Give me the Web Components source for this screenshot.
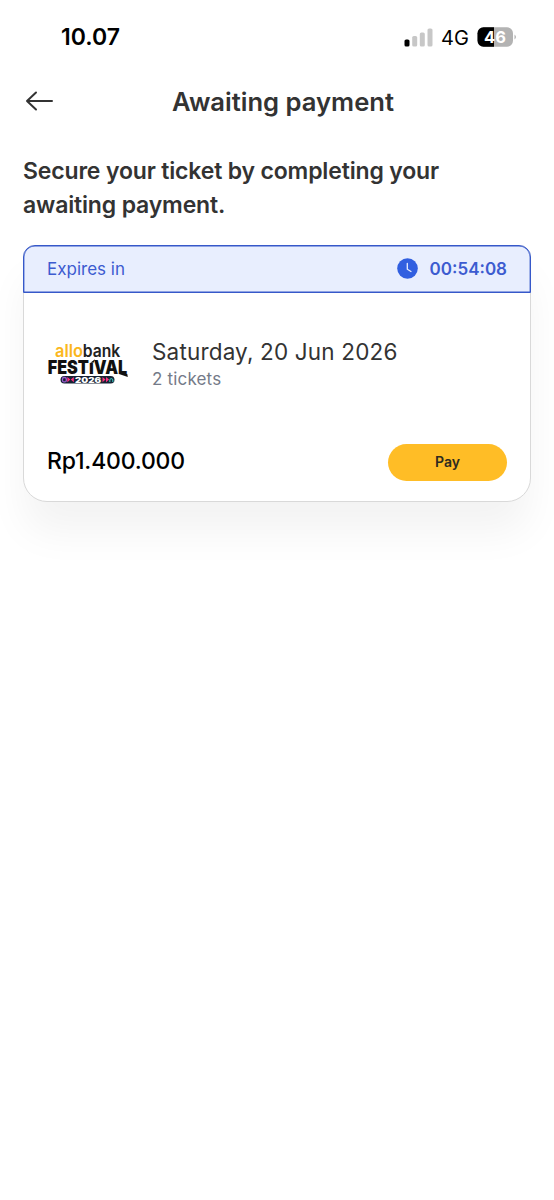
<!DOCTYPE html>
<html lang="en">
<head>
<meta charset="utf-8">
<title>Awaiting payment</title>
<style>
body{margin:0;background:#fff;font-family:Inter,"Liberation Sans",sans-serif;color:#333}
</style>
</head>
<body>
<payment-screen></payment-screen>
<script>
const define = (name, html) => customElements.define(name, class extends HTMLElement {
  constructor() {
    super();
    const t = document.createElement('template');
    t.innerHTML = html;
    this.attachShadow({mode: 'open'}).append(t.content.cloneNode(true));
  }
});

define('status-bar', `
<style>
:host{display:flex;height:75px;box-sizing:border-box;padding:0 37px 0 61px;justify-content:space-between;color:#000}
.time{font-weight:600;font-size:23px;line-height:75px}
.right{display:flex;align-items:center;height:75px}
.net{font-size:20px;line-height:75px;margin-left:8px;width:36px;white-space:nowrap;font-weight:400;padding-top:1px}
svg{display:block}
</style>
<span class="time">10.07</span>
<div class="right">
<svg width="29" height="20" viewBox="0 0 29 20"><rect x="0.5" y="11.500" width="5" height="7" rx="1.6" fill="#000"/><g fill="#c7c7c7"><rect x="8.200" y="8" width="5" height="10.500" rx="1.600"/><rect x="15.800" y="4.500" width="5" height="14" rx="1.600"/><rect x="23.500" y=".5" width="5" height="18" rx="1.600"/></g></svg>
<span class="net">4G</span>
<svg width="40" height="21" viewBox="0 0 40 21"><defs><clipPath id="b"><rect x=".5" y=".3" width="35.500" height="19.500" rx="6"/></clipPath></defs><g clip-path="url(#b)"><rect width="37" height="21" fill="#b3b3b3"/><rect width="17" height="21" fill="#000"/></g><path d="M37.500 7.500q3 2.500 0 5z" fill="#b3b3b3"/><text x="18" y="16" text-anchor="middle" font-family="Inter" font-size="16.500" font-weight="700" fill="#fff">46</text></svg>
</div>`);

define('nav-bar', `
<style>
:host{display:grid;grid-template-columns:1fr auto 1fr;align-items:center;height:54px;padding:0 11px 0 23px}
h1{margin:0;font-size:25.600px;line-height:54px;font-weight:600;color:#333}
svg{display:block}
</style>
<svg width="32" height="24" viewBox="0 0 32 24" fill="none" stroke="#333" stroke-width="2" stroke-linecap="round" stroke-linejoin="round"><path d="M29 11H4M13 2.500 4 11l9 8.500"/></svg>
<h1><slot></slot></h1>`);

define('festival-logo', `
<style>:host{display:block;width:82px;height:44px}svg{display:block;overflow:visible}text{font-family:Inter,sans-serif}</style>
<svg width="82" height="44" viewBox="0 0 82 44">
<text x="8" y="15.800" font-size="17" font-weight="600" fill="#fbb71d" textLength="28" lengthAdjust="spacingAndGlyphs">allo</text>
<text x="35.800" y="15.800" font-size="17" font-weight="600" fill="#222" textLength="37.500" lengthAdjust="spacingAndGlyphs">bank</text>
<text x=".7" y="33.400" font-size="18.800" font-weight="900" fill="#111" textLength="79.500" lengthAdjust="spacingAndGlyphs">FESTıVAL</text>
<path d="M43.300 21.800 48 18.200l-1.500 3.600zM72 33h8.300l.5 3z" fill="#111"/>
<rect x="13.500" y="34.900" width="54" height="7.600" rx="3.800" fill="#172335"/>
<rect x="15.500" y="36.500" width="3.800" height="4.400" rx="1.500" fill="none" stroke="#9a5bd0" stroke-width="1.300"/>
<path d="m20.300 36 3 2.600-3 2.600zm6.500 0-3 2.600 3 2.600z" fill="#ff2d80"/>
<path d="m55.500 36 3 2.600-3 2.600zm3.500 0 3 2.600-3 2.600z" fill="#ff2d80"/>
<path d="M62.800 41v-2q1.500-3 3 0v2" fill="none" stroke="#35b9b2" stroke-width="1.200"/>
<text x="28" y="41.500" font-size="7.800" font-weight="900" fill="#fff" textLength="26" lengthAdjust="spacingAndGlyphs">2026</text>
</svg>`);

define('expiry-banner', `
<style>
:host{display:flex;align-items:center;justify-content:space-between;box-sizing:border-box;height:48px;margin:-1px -1px 0;padding:0 23px 1px;border:1px solid #3658c9;box-shadow:inset 0 0 0 .4px #3658c9;border-radius:12px 12px 0 0;background:#e8eefe;color:#3c5bd0;font-size:17px}
.timer{display:flex;align-items:center;font-weight:600}
svg{display:block;margin-right:12px}
</style>
<span>Expires in</span>
<span class="timer"><svg width="21" height="21" viewBox="0 0 21 21"><circle cx="10.500" cy="10.500" r="10.300" fill="#315fe0"/><path d="M10.300 5.500v5.700l3.700 2.300" fill="none" stroke="#e8eefe" stroke-width="1.300" stroke-linecap="round"/></svg><slot></slot></span>`);

define('pay-button', `
<style>
:host{display:block}
button{display:block;border:0;margin:0;padding:0 0 2px;width:119px;height:37px;border-radius:19px;background:#ffbd26;color:#2d2a20;font:600 14px/35px Inter,sans-serif}
</style><button><slot></slot></button>`);

define('ticket-card', `
<style>
:host{display:block;box-sizing:border-box;height:256.500px;border:1px solid #d9d9d9;border-radius:12px 12px 24px 24px;background:#fff;box-shadow:0 32px 40px -2px rgba(0,0,0,.05)}
.event{display:flex;align-items:flex-start;padding:48px 23px 0}
.info{margin-left:23px}
.date{font-size:22.500px;letter-spacing:.17px;line-height:28px;color:#333;white-space:nowrap;margin-top:-3px}
.count{font-size:17px;letter-spacing:.17px;line-height:27px;color:#747a88}
.foot{display:flex;justify-content:space-between;align-items:center;padding:0 23px;margin-top:51px}
.price{font-size:23px;letter-spacing:-.18px;line-height:34px;color:#000;font-weight:500;padding-bottom:3px}
</style>
<expiry-banner><slot name="timer"></slot></expiry-banner>
<div class="event"><festival-logo></festival-logo><div class="info"><div class="date"><slot name="date"></slot></div><div class="count"><slot name="count"></slot></div></div></div>
<div class="foot"><span class="price"><slot name="price"></slot></span><pay-button>Pay</pay-button></div>`);

define('payment-screen', `
<style>
:host{display:block;min-height:1200px;background:#fff;overflow:hidden}
h2{margin:25px 23px 23px;font-size:23px;letter-spacing:-.16px;line-height:34px;font-weight:600;color:#333;white-space:nowrap}
ticket-card{margin:0 23px}
</style>
<status-bar></status-bar>
<nav-bar>Awaiting payment</nav-bar>
<h2>Secure your ticket by completing your<br>awaiting payment.</h2>
<ticket-card><span slot="timer">00:54:08</span><span slot="date">Saturday, 20 Jun 2026</span><span slot="count">2 tickets</span><span slot="price">Rp1.400.000</span></ticket-card>`);
</script>
</body>
</html>
